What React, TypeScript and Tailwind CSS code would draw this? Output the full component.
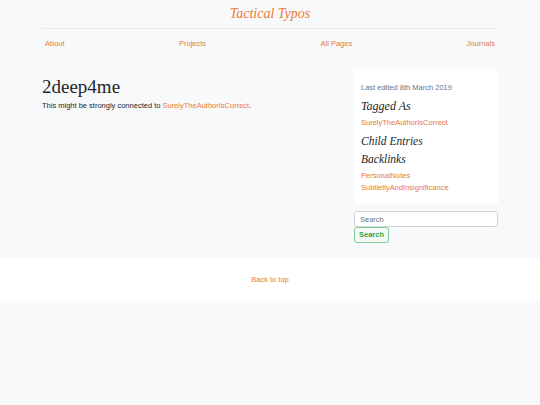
import React from "react";

const sans = { fontFamily: '"Liberation Sans", Arial, sans-serif' };

const App = () => {
  return (
    <div className="min-h-[405px] bg-[#f8f9fa] text-[#212529]" style={sans}>
      <div className="mx-[42px]">
        {/* Header */}
        <div className="pt-[5px] text-center font-['Liberation_Serif',serif] text-[14px] italic leading-[17px]">
          <a className="text-[#e8793b]">Tactical Typos</a>
        </div>
        <div className="mt-[6px] border-t border-[#e9ecef]" />
        <nav className="flex justify-between px-[3px] pt-[9px] text-[7.5px] leading-[12px] text-[#e8793b]">
          <a>About</a>
          <a>Projects</a>
          <a>All Pages</a>
          <a>Journals</a>
        </nav>

        {/* Body */}
        <div className="mt-[19px] flex justify-between">
          <div className="pt-[6px]">
            <h1 className="font-['Liberation_Serif',serif] text-[19px] leading-[24px]">2deep4me</h1>
            <p className="mt-[1px] text-[7.5px] leading-[12px]">
              This might be strongly connected to{" "}
              <a className="text-[#e8793b]">SurelyTheAuthorIsCorrect</a>.
            </p>
          </div>
          <div className="w-[144px]">
            <div className="bg-white px-[7px] pb-[10px] pt-[13px]">
              <p className="text-[7.5px] leading-[12px] text-[#6c757d]">Last edited 8th March 2019</p>
              <h3 className="mt-[5px] font-['Liberation_Serif',serif] text-[12px] italic leading-[15px]">Tagged As</h3>
              <a className="mt-[3px] block text-[7.5px] leading-[12px] text-[#e8793b]">SurelyTheAuthorIsCorrect</a>
              <h3 className="mt-[5px] font-['Liberation_Serif',serif] text-[11.5px] italic leading-[15px]">Child Entries</h3>
              <h3 className="mt-[3px] font-['Liberation_Serif',serif] text-[11.5px] italic leading-[15px]">Backlinks</h3>
              <a className="mt-[3px] block text-[7.5px] leading-[12px] text-[#e8793b]">PersonalNotes</a>
              <a className="block text-[7.5px] leading-[12px] text-[#e8793b]">SubtletlyAndInsignificance</a>
            </div>
            <input
              placeholder="Search"
              className="mt-[7px] block h-[16px] w-full rounded-[3px] border border-[#ced4da] bg-white px-[5px] text-[7.5px] text-[#495057] placeholder:text-[#6c757d] outline-none"
            />
            <button className="block h-[16px] rounded-[3px] border border-[#7fcf92] px-[4px] text-[7.5px] font-bold leading-[12px] text-[#28a745]">
              Search
            </button>
          </div>
        </div>
      </div>

      {/* Footer */}
      <footer className="mt-[15px] flex h-[43px] items-center justify-center bg-white">
        <a className="text-[7.5px] leading-[12px] text-[#e8793b]">Back to top</a>
      </footer>
    </div>
  );
};

export default App;
